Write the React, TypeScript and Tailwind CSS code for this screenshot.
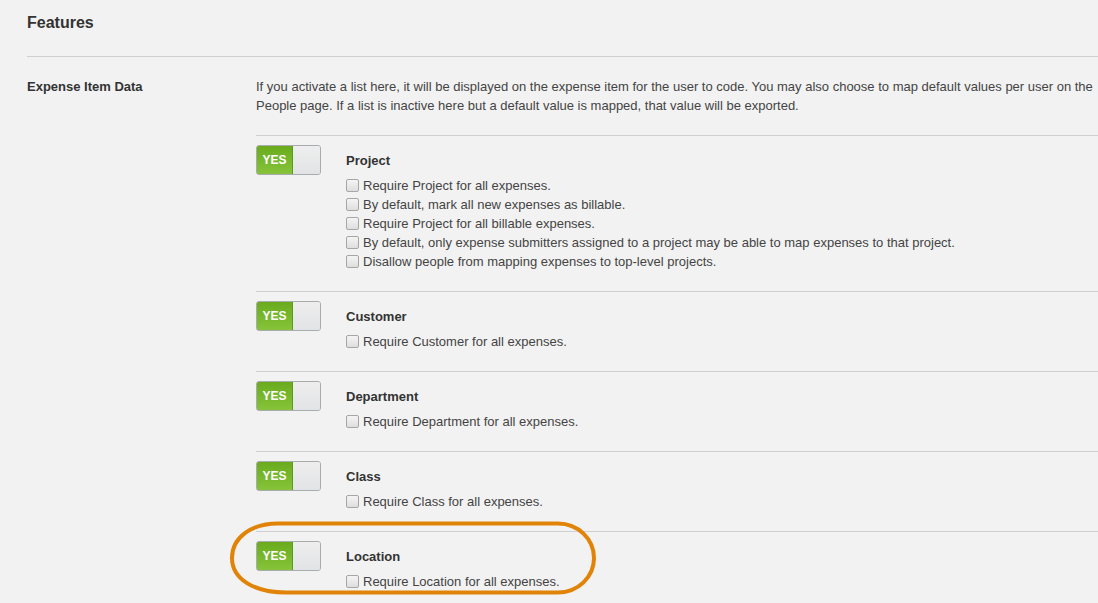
import React from "react";

type Section = { name: string; options: string[] };

const sections: Section[] = [
  {
    name: "Project",
    options: [
      "Require Project for all expenses.",
      "By default, mark all new expenses as billable.",
      "Require Project for all billable expenses.",
      "By default, only expense submitters assigned to a project may be able to map expenses to that project.",
      "Disallow people from mapping expenses to top-level projects.",
    ],
  },
  { name: "Customer", options: ["Require Customer for all expenses."] },
  { name: "Department", options: ["Require Department for all expenses."] },
  { name: "Class", options: ["Require Class for all expenses."] },
  { name: "Location", options: ["Require Location for all expenses."] },
];

function Toggle() {
  return (
    <div className="-mt-px flex h-[30px] w-[65px] shrink-0 overflow-hidden rounded-[3px] border border-[#a9acaf] bg-[#e6e7e8]">
      <div className="-my-px -ml-px flex w-[37px] items-center justify-center rounded-l-[3px] border border-[#5d9a1b] bg-gradient-to-b from-[#6aab1c] to-[#86c33a] text-[12px] font-bold text-white">
        YES
      </div>
      <div className="flex-1 bg-gradient-to-b from-[#eeeeef] to-[#e2e3e4]" />
    </div>
  );
}

function Checkbox() {
  return (
    <span className="inline-block h-[13px] w-[13px] shrink-0 rounded-[2px] border border-[#a6a6a6] bg-gradient-to-b from-[#f4f4f4] to-[#dedede]" />
  );
}

export default function App() {
  return (
    <div
      className="min-h-[603px] w-[1098px] overflow-hidden bg-[#f2f2f2] pl-[27px] text-[#333]"
      style={{ fontFamily: '"Liberation Sans", Arial, sans-serif' }}
    >
      <div className="border-b border-[#cfcfcf] pt-[13px] pb-[24px] text-[16px] font-bold leading-[19px] text-[#333]">
        Features
      </div>
      <div className="flex">
        <div className="w-[229px] shrink-0 pt-[20px] text-[13px] font-bold leading-[19px] text-[#333]">
          Expense Item Data
        </div>
        <div className="relative flex-1">
          <div className="border-b border-[#cfcfcf] pt-[20px] pb-[20px] text-[13px] leading-[19px] text-[#444] whitespace-nowrap">
            <div>
              If you activate a list here, it will be displayed on the expense item for the user to code. You may also choose to map default values per user on the
            </div>
            <div>People page. If a list is inactive here but a default value is mapped, that value will be exported.</div>
          </div>
          {sections.map((s, i) => (
            <div
              key={s.name}
              className={
                "flex gap-[25px] pt-[10px] pb-[20px] " +
                (i < sections.length - 1 ? "border-b border-[#cfcfcf]" : "")
              }
            >
              <Toggle />
              <div className="flex flex-col">
                <div className="text-[13px] font-bold leading-[30px] text-[#333]">{s.name}</div>
                {s.options.map((o) => (
                  <div key={o} className="flex items-center gap-[4px] whitespace-nowrap text-[13px] leading-[19px] text-[#444]">
                    <Checkbox />
                    <span>{o}</span>
                  </div>
                ))}
              </div>
            </div>
          ))}
          <svg
            className="pointer-events-none absolute left-[-28px] top-[462px]"
            width="372"
            height="78"
            viewBox="0 0 372 78"
          >
            <path
              d="M 50 4.5 L 330 4.5 C 350 4.5 366 20 366 39 C 366 58 350 73.5 330 73.5 L 58 73.5 C 26 73.5 4 60 4 39 C 4 18 24 4.5 50 4.5 Z"
              fill="none"
              stroke="#e08307"
              strokeWidth="4"
            />
          </svg>
        </div>
      </div>
    </div>
  );
}
